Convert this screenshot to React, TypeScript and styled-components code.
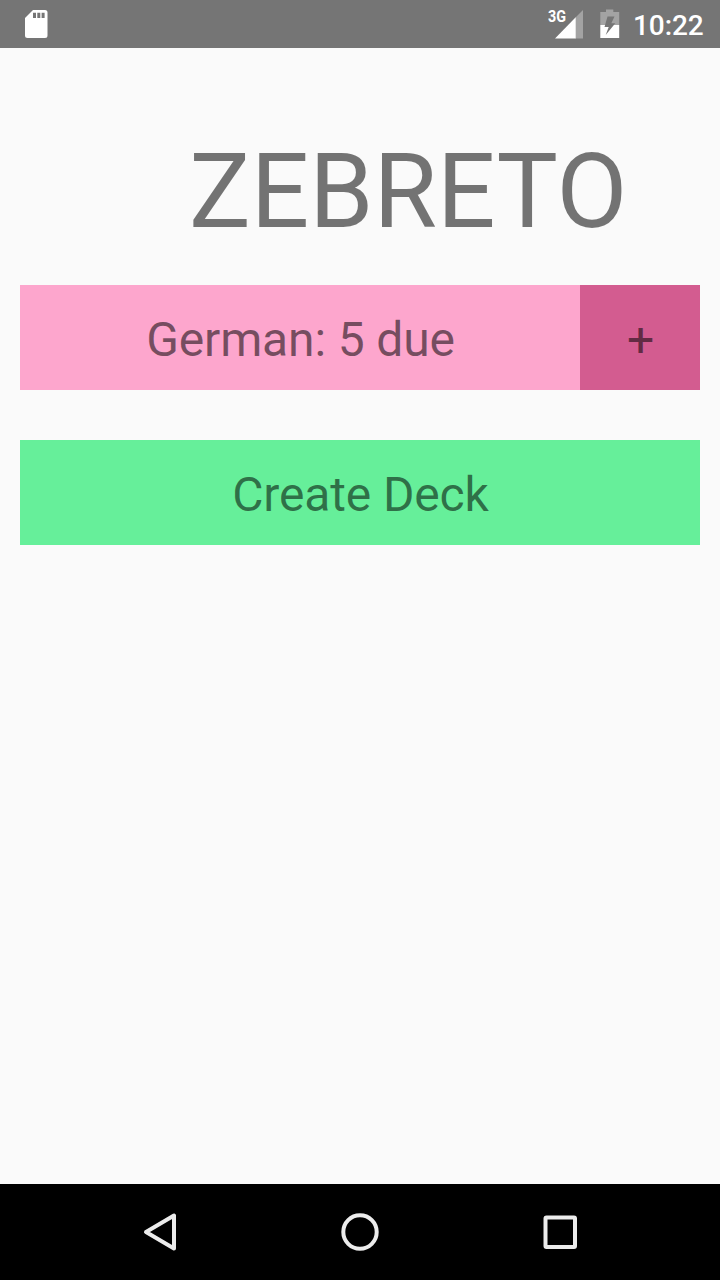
import React from 'react';
import styled, { createGlobalStyle } from 'styled-components';

const GlobalStyle = createGlobalStyle`
  * { box-sizing: border-box; }
  body { margin: 0; background: #fafafa; font-family: Roboto, sans-serif; }
`;

const Screen = styled.div`
  display: flex;
  flex-direction: column;
  width: 720px;
  height: 1280px;
  background: #fafafa;
  overflow: hidden;
`;

const StatusBar = styled.header`
  display: flex;
  align-items: center;
  height: 48px;
  flex: none;
  padding: 0 16px 0 24px;
  background: #757575;
  color: #fff;
`;

const StatusIcon = styled.svg<{ $gap?: number }>`
  display: block;
  flex: none;
  margin-right: ${(p) => p.$gap ?? 0}px;
`;

const Spacer = styled.div`
  flex: 1;
`;

const NetworkLabel = styled.span`
  align-self: flex-start;
  width: 20px;
  margin: 8px -13px 0 0;
  font: 700 16.5px/18px Roboto, sans-serif;
  transform: scaleX(0.87);
  transform-origin: left;
`;

const Clock = styled.span`
  width: 71px;
  padding-top: 4px;
  font: 500 28px/46px Roboto, sans-serif;
  letter-spacing: -0.1px;
  white-space: nowrap;
`;

const Content = styled.main`
  flex: 1;
  display: flex;
  flex-direction: column;
  padding: 83px 20px 0;
  color: rgba(0, 0, 0, 0.54);
`;

const Title = styled.h1`
  margin: 0 0 32px;
  padding-left: 169px;
  font-weight: 400;
  font-size: 103px;
  line-height: 122px;
  white-space: nowrap;
`;

const DeckRow = styled.div`
  display: flex;
  margin-bottom: 50px;
`;

const Button = styled.button<{ $color: string; $width?: number }>`
  flex: ${(p) => (p.$width ? `0 0 ${p.$width}px` : '1 1 auto')};
  height: 105px;
  padding: 5px 0 0 1px;
  border: 0;
  background: ${(p) => p.$color};
  color: inherit;
  font: 400 48px/56px Roboto, sans-serif;
  letter-spacing: -0.15px;
  text-align: center;
`;

const Actions = styled.div`
  display: flex;
`;

const NavBar = styled.nav`
  display: flex;
  justify-content: center;
  gap: 104px;
  height: 96px;
  flex: none;
  background: #000;
`;

const NavIcon = styled.svg`
  display: block;
  width: 96px;
  height: 96px;
  fill: none;
  stroke: #ececec;
  stroke-width: 4;
  stroke-linejoin: round;
`;

export default function App() {
  return (
    <Screen>
      <GlobalStyle />
      <StatusBar>
        <StatusIcon width="24" height="48" viewBox="0 0 24 48">
          <path
            fill="#fff"
            fillRule="evenodd"
            d="M9 10H21Q23.500 10 23.500 12.500V35.500Q23.500 38 21 38H3.500Q1 38 1 35.500V18ZM9 12.700V18H12V12.700ZM13.300 12.700V18H16.300V12.700ZM17.600 12.700V18H20.600V12.700Z"
          />
        </StatusIcon>
        <Spacer />
        <NetworkLabel>3G</NetworkLabel>
        <StatusIcon width="28" height="48" viewBox="0 0 28 48" $gap={17}>
          <path fill="#a3a3a3" d="M28 10V38.500H20V18Z" />
          <path fill="#fff" d="M20.700 17.300V38.500H0Z" />
        </StatusIcon>
        <StatusIcon width="20" height="48" viewBox="0 0 20 48" $gap={13}>
          <path fill="#a3a3a3" d="M6 9.500H13.300V12H19.200V25H0.300V12H6Z" />
          <path fill="#fff" d="M0.300 25H19.200V38H0.300Z" />
          <path fill="#757575" d="M7.500 16.500H14.500L11.300 23.300H15.300L5.700 35L8.700 27H4.500Z" />
        </StatusIcon>
        <Clock>10:22</Clock>
      </StatusBar>
      <Content>
        <Title>ZEBRETO</Title>
        <DeckRow>
          <Button $color="#fda6cd">German: 5 due</Button>
          <Button $color="#d35c90" $width={120}>+</Button>
        </DeckRow>
        <Actions>
          <Button $color="#66ef9a">Create Deck</Button>
        </Actions>
      </Content>
      <NavBar>
        <NavIcon viewBox="0 0 96 96">
          <path d="M62 31.500V64.500L34 48Z" />
        </NavIcon>
        <NavIcon viewBox="0 0 96 96">
          <circle cx="48" cy="48" r="16.700" />
        </NavIcon>
        <NavIcon viewBox="0 0 96 96">
          <rect x="33.500" y="33.500" width="29.500" height="29.500" rx="1" />
        </NavIcon>
      </NavBar>
    </Screen>
  );
}
